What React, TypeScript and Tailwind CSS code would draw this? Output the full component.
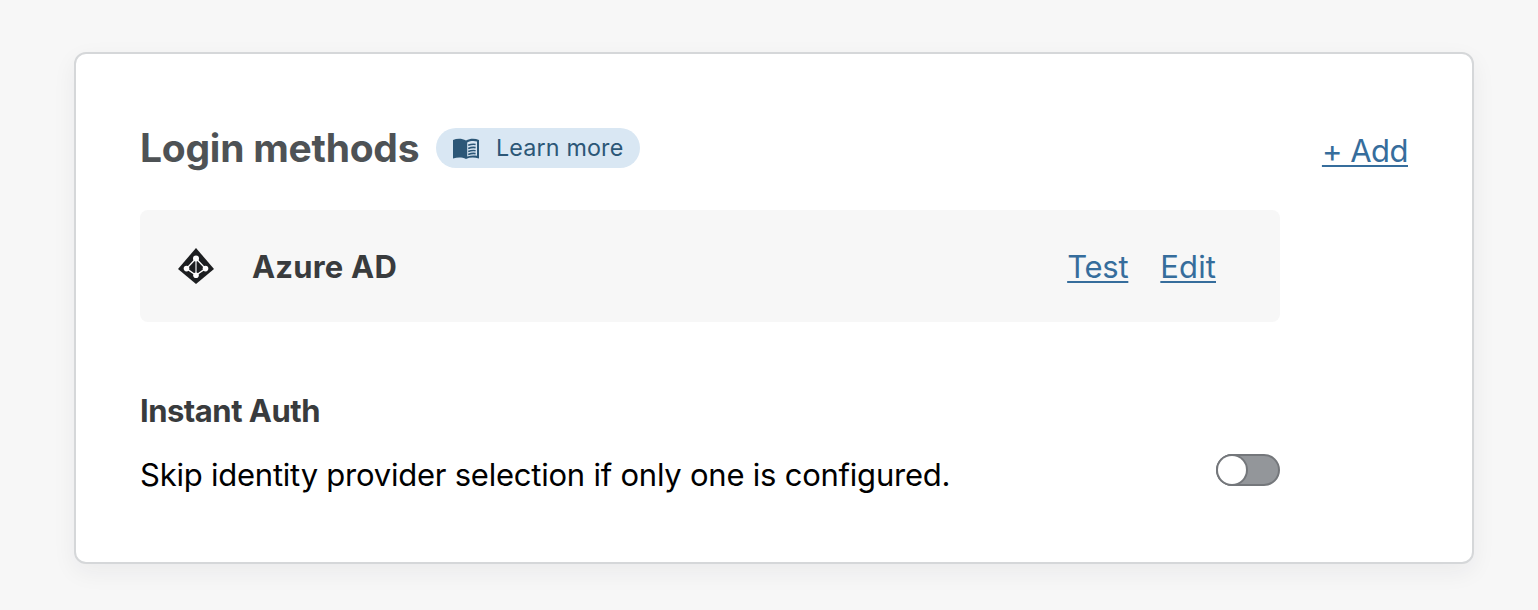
function BookIcon() {
  return (
    <svg width="28" height="22" viewBox="0 0 28 22" className="relative top-px shrink-0">
      <path d="M1 2C5 .4 10 .4 14 2.5C18 .4 23 .4 27 2V20.6C22.5 19.2 18 19.2 14 21C10 19.2 5.5 19.2 1 20.6Z" fill="#2c5777" />
      <path d="M15.2 4.4C18.5 2.7 22 2.6 25 3.5V17.8C22 17.1 18.5 17.2 15.2 18.6Z" fill="#d9e7f3" />
      <path d="M16.2 7.3Q20 5.9 23.6 6.5M16.2 10.4Q20 9 23.6 9.6M16.2 13.5Q20 12.1 23.6 12.7M16.2 16.4Q20 15 23.6 15.6" fill="none" stroke="#2c5777" strokeWidth="1.6" />
    </svg>
  );
}

function DirectoryIcon() {
  return (
    <svg width="36" height="36" viewBox="0 0 36 36" className="shrink-0">
      <path d="M18 0L36 21L18 36L0 21Z" fill="#1d1f21" />
      <path d="M18 10.6L8.5 20.6L18 27.2L27.5 20.6Z" fill="none" stroke="#fff" strokeWidth="1.4" />
      <path d="M18 10.6V27.2" stroke="#a5a7a9" strokeWidth="1.9" />
      <g fill="#fff">
        <circle cx="18" cy="10.6" r="3" />
        <circle cx="8.5" cy="20.6" r="2.8" />
        <circle cx="27.5" cy="20.6" r="2.8" />
        <circle cx="18" cy="27.2" r="2.8" />
      </g>
    </svg>
  );
}

const link =
  "text-[31px] leading-10 text-[#366d9c] underline decoration-2 underline-offset-[3px] [text-decoration-skip-ink:none]";

export default function App() {
  return (
    <main className="h-[610px] bg-[#f7f7f7] px-[74px] pt-[52px] pr-16 font-['Inter',sans-serif] whitespace-nowrap">
      <section className="h-[512px] w-[1400px] rounded-xl border-2 border-[#d5d7d9] bg-white px-16 pt-[74px] shadow-[0_8px_24px_rgba(29,31,50,0.06)]">
        <header className="flex h-10 items-center">
          <h1 className="w-[280px] text-[39px] leading-10 font-bold tracking-[-0.25px] text-[#4e5255]">Login methods</h1>
          <a href="#" className="ml-4 flex h-10 w-[204px] items-center rounded-full bg-[#d9e7f3] pl-4 text-[23.3px] tracking-[0.15px] text-[#2c5777]">
            <BookIcon />
            <span className="ml-4">Learn more</span>
          </a>
          <a href="#" className={`${link} mt-1.5 ml-auto tracking-[-0.5px]`}>+ Add</a>
        </header>
        <div className="mt-[42px] flex h-28 w-[1140px] items-center rounded-lg bg-[#f7f7f7] pr-16 pl-[38px]">
          <DirectoryIcon />
          <h2 className="mt-0.5 ml-[38px] text-[31px] leading-10 font-bold tracking-[0.2px] text-[#393b3d]">Azure AD</h2>
          <a href="#" className={`${link} mt-0.5 mr-8 ml-auto tracking-[-0.25px]`}>Test</a>
          <a href="#" className={`${link} mt-0.5 tracking-[0.1px]`}>Edit</a>
        </div>
        <h2 className="mt-[69px] text-[31px] leading-10 font-bold tracking-[-0.5px] text-[#393b3d]">Instant Auth</h2>
        <div className="mt-6 flex w-[1140px] items-start justify-between">
          <p className="text-[31px] leading-10 tracking-[-0.23px] text-black">Skip identity provider selection if only one is configured.</p>
          <button type="button" role="switch" aria-checked="false" aria-label="Instant Auth" className="-mt-px flex h-8 w-16 rounded-full border-2 border-[#74777b] bg-[#93969a]">
            <span className="size-7 rounded-full bg-white shadow-[0_0_0_2px_#74777b]" />
          </button>
        </div>
      </section>
    </main>
  );
}
